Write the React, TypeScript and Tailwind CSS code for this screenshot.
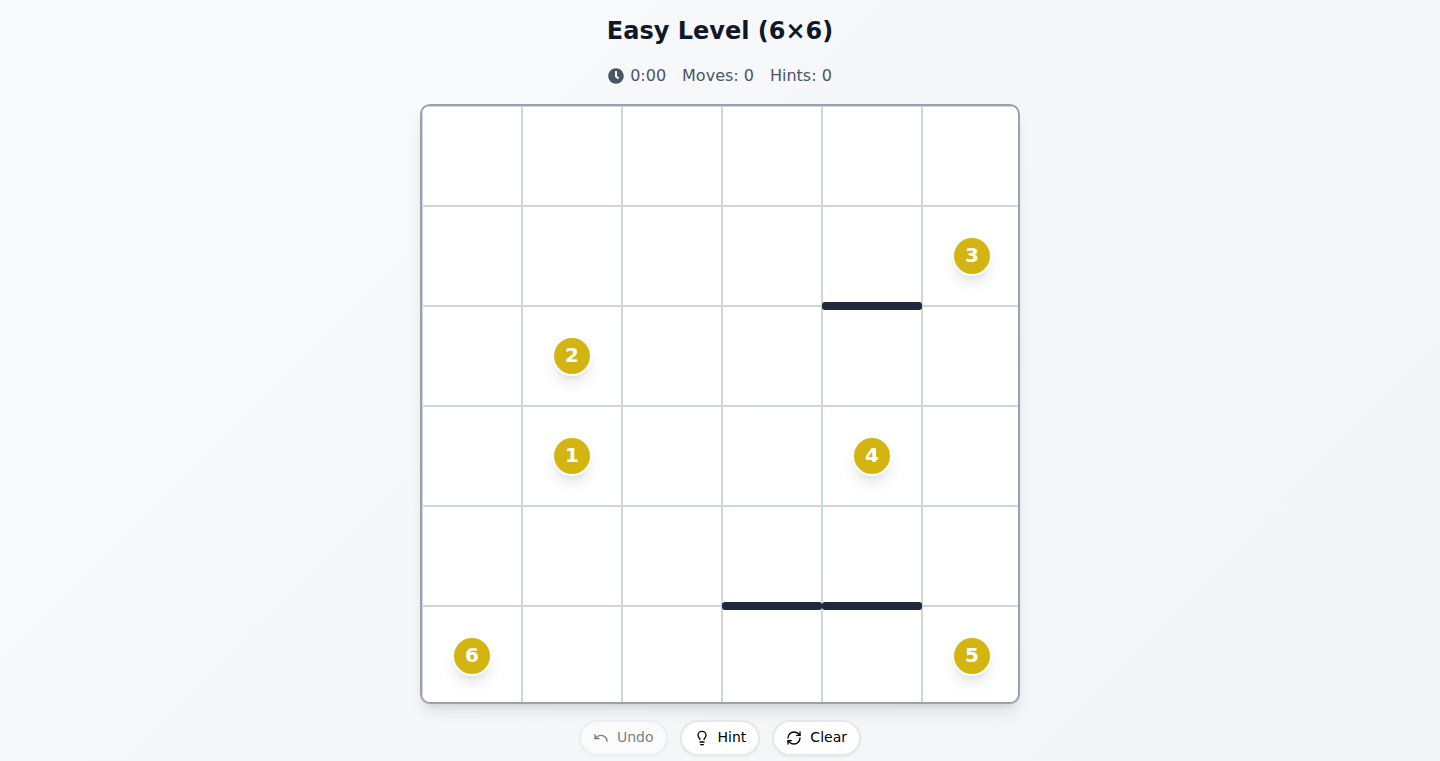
import React from "react";
import { FaClock } from "react-icons/fa";
import { LuLightbulb, LuRefreshCw, LuUndo } from "react-icons/lu";

const SIZE = 6;

// "row-col" -> checkpoint number
const checkpoints: Record<string, number> = {
  "3-1": 1,
  "2-1": 2,
  "1-5": 3,
  "3-4": 4,
  "5-5": 5,
  "5-0": 6,
};

// cells with a wall along their bottom edge
const walls = ["1-4", "4-3", "4-4"];

const Cell = ({ id }: { id: string }) => (
  <div className="relative flex items-center justify-center border border-gray-300">
    {checkpoints[id] && (
      <span className="flex h-10 w-10 items-center justify-center rounded-full border-2 border-white bg-[#d4b411] pb-0.5 text-xl font-bold text-white shadow-lg">
        {checkpoints[id]}
      </span>
    )}
    {walls.includes(id) && (
      <span className="absolute -inset-x-px -bottom-[5px] z-10 h-2 rounded-[3px] bg-gray-800" />
    )}
  </div>
);

const Board = () => {
  const cells = Array.from(
    { length: SIZE * SIZE },
    (_, i) => `${Math.floor(i / SIZE)}-${i % SIZE}`
  );

  return (
    <div className="aspect-square w-full max-w-[600px] overflow-hidden rounded-[10px] border-2 border-gray-400 bg-white shadow-lg">
      <div className="grid auto-rows-[100px] grid-cols-[repeat(6,100px)]">
        {cells.map((id) => (
          <Cell key={id} id={id} />
        ))}
      </div>
    </div>
  );
};

type ActionProps = {
  icon: React.ReactNode;
  label: string;
  disabled?: boolean;
};

const ActionButton = ({ icon, label, disabled }: ActionProps) => (
  <button
    type="button"
    disabled={disabled}
    className="flex items-center gap-2 rounded-full border-2 border-gray-200 bg-white px-3 py-1.5 text-sm text-black shadow-xs disabled:opacity-50"
  >
    {icon}
    <span className="pb-0.5 leading-[18px]">{label}</span>
  </button>
);

const App = () => {
  return (
    <main className="flex min-h-screen flex-col items-center gap-4 bg-linear-135 from-gray-50 to-gray-100 px-4 pt-4 font-['DejaVu_Sans',sans-serif]">
      <h1 className="pb-0.5 text-2xl leading-[30px] font-bold text-gray-900">
        Easy Level (6×6)
      </h1>

      {/* Game stats */}
      <div className="flex items-center gap-4 text-base text-gray-600">
        <span className="flex items-center gap-1.5">
          <FaClock className="h-4 w-4" />
          0:00
        </span>
        <span>Moves: 0</span>
        <span>Hints: 0</span>
      </div>

      <Board />

      {/* Controls */}
      <div className="flex gap-3">
        <ActionButton icon={<LuUndo size={16} />} label="Undo" disabled />
        <ActionButton icon={<LuLightbulb size={16} />} label="Hint" />
        <ActionButton icon={<LuRefreshCw size={16} />} label="Clear" />
      </div>
    </main>
  );
};

export default App;
